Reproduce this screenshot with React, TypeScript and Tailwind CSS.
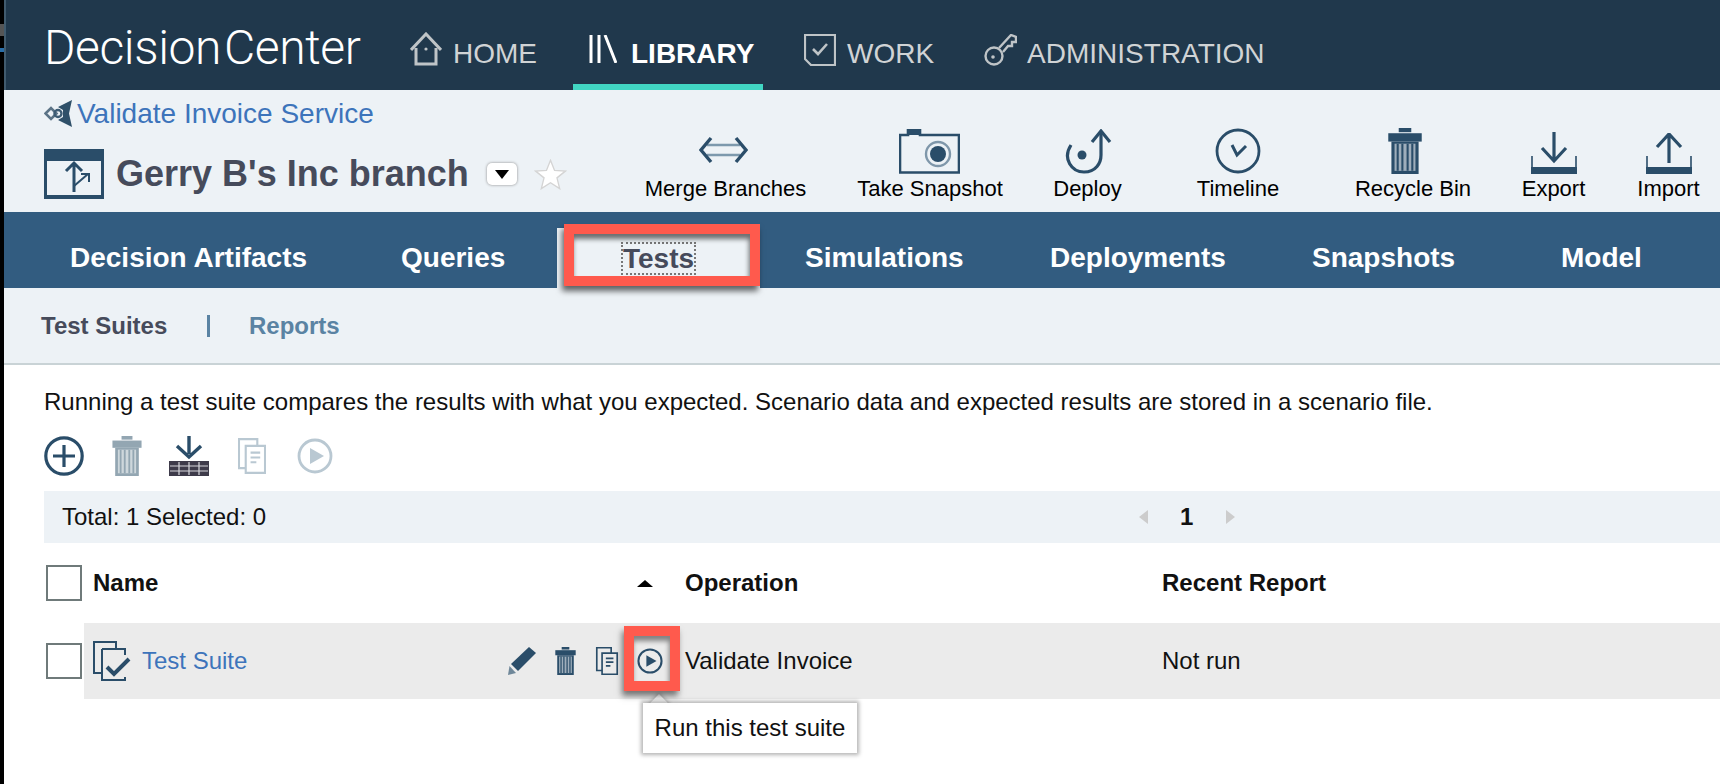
import React from 'react';

const navy = '#2a4d69';

const HomeIcon = () => (
  <svg width="32" height="34" viewBox="0 0 32 34" fill="none" stroke="#bfc4c7" strokeWidth="3">
    <path d="M1 18 L16 2 L31 18" />
    <path d="M6 16 V32 H26 V16" />
    <circle cx="16" cy="17" r="1.6" fill="#bfc4c7" stroke="none" />
  </svg>
);

const LibraryIcon = () => (
  <svg width="28" height="28" viewBox="0 0 28 28" fill="none" stroke="#fff" strokeWidth="3">
    <path d="M2 0 V28 M10 0 V28 M16 0 L27 28" />
  </svg>
);

const WorkIcon = () => (
  <svg width="32" height="32" viewBox="0 0 32 32" fill="none" stroke="#bfc4c7" strokeWidth="2.2">
    <path d="M1 1 H31 V31 H7 L1 25 Z" />
    <path d="M9 15 L14 20 L23 10" strokeWidth="2.6" />
  </svg>
);

const KeyIcon = () => (
  <svg width="33" height="32" viewBox="0 0 33 32" fill="none" stroke="#bfc4c7" strokeWidth="2.4">
    <circle cx="10" cy="22" r="8.500" />
    <circle cx="9" cy="23" r="1.800" fill="#bfc4c7" stroke="none" />
    <path d="M15 14 L27 1 L32 3 V8 H28 V12 H24 L19 18" />
  </svg>
);

const ServiceIcon = () => (
  <svg width="28" height="27" viewBox="0 0 28 27" fill="none">
    <path d="M1.500 13.500 L7 8 L12.500 13.500 L7 19 Z" stroke="#5b7386" strokeWidth="2.6" />
    <circle cx="14" cy="13.500" r="3.500" stroke="#3d5c74" strokeWidth="2.4" />
    <path d="M28 0 L14 7 L19 10 L19 17 L14 20 L28 27 L25 13.500 Z" fill="#2f5069" />
  </svg>
);

const BranchIcon = () => (
  <svg width="60" height="50" viewBox="0 0 60 50" fill="none">
    <rect x="0" y="0" width="60" height="50" fill="#2a4d69" />
    <rect x="3" y="12" width="54" height="34" fill="#edf2f6" />
    <path d="M30 43 V14 M22 22 L30 14 L38 22" stroke="#2a4d69" strokeWidth="3" />
    <path d="M30 37 L44 25 M37 25 H45 V33" stroke="#2a4d69" strokeWidth="2" />
  </svg>
);

const MergeIcon = () => (
  <svg width="49" height="28" viewBox="0 0 49 28" fill="none" strokeWidth="3.4">
    <path d="M8 9 H41 M8 19 H41" stroke="#7d99ad" strokeWidth="2.6" />
    <path d="M12 2 L2 14 L12 26 M37 2 L47 14 L37 26" stroke={navy} />
  </svg>
);

const CameraIcon = () => (
  <svg width="61" height="45" viewBox="0 0 61 45" fill="none" stroke={navy}>
    <path d="M1 6 H9 V1 H21 V6 H60 V43.500 H1 Z" strokeWidth="2.6" />
    <rect x="9" y="0" width="12" height="6" fill={navy} stroke="none" />
    <circle cx="39" cy="25" r="12" strokeWidth="2.4" stroke="#7f97aa" />
    <circle cx="39" cy="25" r="8" fill={navy} stroke="none" />
  </svg>
);

const DeployIcon = () => (
  <svg width="48" height="45" viewBox="0 0 48 45" fill="none" stroke={navy} strokeWidth="3.2">
    <path d="M7 16 C-2 30 8 43 20 43 C32 43 37 34 37 26 V3" />
    <path d="M28 13 L37 2 L46 13" />
    <circle cx="18" cy="26" r="4.500" fill={navy} stroke="none" />
  </svg>
);

const ClockIcon = () => (
  <svg width="46" height="46" viewBox="0 0 46 46" fill="none" stroke={navy} strokeWidth="2.8">
    <circle cx="23" cy="23" r="21" />
    <path d="M17 17 L22 27 L31 18" strokeWidth="3" />
  </svg>
);

const TrashIcon = ({ w, h, color }: { w: number; h: number; color: string }) => (
  <svg width={w} height={h} viewBox="0 0 32 44" fill="none">
    <rect x="10" y="0" width="12" height="4" fill={color} />
    <rect x="0" y="5" width="32" height="8" fill={color} />
    <path d="M3 13 H29 V44 H3 Z" fill={color} />
    <rect x="6" y="15" width="20" height="26" fill="#fff" opacity="0.55" />
    <path d="M9 15 V41 M13.500 15 V41 M18.500 15 V41 M23 15 V41" stroke={color} strokeWidth="2" />
  </svg>
);

const ExportIcon = () => (
  <svg width="46" height="42" viewBox="0 0 46 42" fill="none" stroke={navy} strokeWidth="3.2">
    <path d="M23 0 V28 M11 16 L23 29 L35 16" />
    <path d="M1 24 V40 H45 V24" strokeWidth="1.6" />
    <rect x="0" y="35" width="46" height="7" fill={navy} stroke="none" />
  </svg>
);

const ImportIcon = () => (
  <svg width="46" height="41" viewBox="0 0 46 41" fill="none" stroke={navy} strokeWidth="3.2">
    <path d="M23 30 V2 M11 14 L23 1 L35 14" />
    <path d="M1 23 V39 H45 V23" strokeWidth="1.6" />
    <rect x="0" y="34" width="46" height="7" fill={navy} stroke="none" />
  </svg>
);

const PlusIcon = () => (
  <svg width="40" height="40" viewBox="0 0 40 40" fill="none" stroke={navy} strokeWidth="3.2">
    <circle cx="20" cy="20" r="18.200" />
    <path d="M20 9 V31 M9 20 H31" />
  </svg>
);

const ImportTableIcon = () => (
  <svg width="40" height="40" viewBox="0 0 40 40" fill="none">
    <path d="M20 0 V18 M8 10 L20 21 L32 10" stroke={navy} strokeWidth="3.4" />
    <rect x="0" y="25" width="40" height="15" fill="#3e3b4a" />
    <path d="M1 30 H39 M1 35 H39 M10 26 V39 M20 26 V39 M30 26 V39" stroke="#d8d8dc" strokeWidth="1.2" />
  </svg>
);

const CopyIcon = ({ w, h, color }: { w: number; h: number; color: string }) => (
  <svg width={w} height={h} viewBox="0 0 29 37" fill="none" stroke={color} strokeWidth="2.2">
    <path d="M8 31 H1 V1 H20 V8" />
    <path d="M8 8 H28 V36 H8 Z" />
    <path d="M13 15 H23 M13 20 H23 M13 25 H19" />
  </svg>
);

const PlayIcon = ({ s, color }: { s: number; color: string }) => (
  <svg width={s} height={s} viewBox="0 0 36 36" fill="none" stroke={color} strokeWidth="2.8">
    <circle cx="18" cy="18" r="16" />
    <path d="M13 10 L27 18 L13 26 Z" fill={color} stroke="none" />
  </svg>
);

const SuiteIcon = () => (
  <svg width="38" height="40" viewBox="0 0 38 40" fill="none" stroke={navy} strokeWidth="2">
    <path d="M8 32 H1 V1 H23 V7" />
    <path d="M9 8 H32 V14 M9 8 V39 H32 V36" />
    <path d="M14 26 L21 33 L36 18" strokeWidth="4" />
  </svg>
);

const PencilIcon = () => (
  <svg width="28" height="28" viewBox="0 0 28 28" fill={navy}>
    <path d="M21 0 L28 6 L10 24 L3 17 Z" />
    <path d="M1.500 19 L8 26 L0 28 Z" fill="#6f8799" />
  </svg>
);

const tools = [
  { label: 'Merge Branches', icon: <MergeIcon />, cell: 'w-[161px] mr-[51px]', shift: 'pr-[5px] pb-[10px]' },
  { label: 'Take Snapshot', icon: <CameraIcon />, cell: 'w-[146px] mr-[50px]', shift: 'pr-[2px]' },
  { label: 'Deploy', icon: <DeployIcon />, cell: 'w-[69px] mr-[75px]', shift: '' },
  { label: 'Timeline', icon: <ClockIcon />, cell: 'w-[82px] mr-[76px]', shift: '' },
  { label: 'Recycle Bin', icon: <TrashIcon w={34} h={46} color={navy} />, cell: 'w-[116px] mr-[50px]', shift: 'pr-[16px]' },
  { label: 'Export', icon: <ExportIcon />, cell: 'w-[65px] mr-[51px]', shift: '' },
  { label: 'Import', icon: <ImportIcon />, cell: 'w-[63px]', shift: '' },
];

const App: React.FC = () => {
  return (
    <div className="flex h-[784px] w-[1720px] overflow-hidden bg-white font-['Liberation_Sans',Arial,sans-serif]">
      {/* Edge of the window behind */}
      <div className="flex w-[4px] shrink-0 flex-col bg-black">
        <div className="mt-[24px] h-[12px] bg-[#555]" />
        <div className="mt-[12px] h-[4px] bg-[#2a6ea8]" />
      </div>

      <div className="relative min-w-0 flex-1">
        {/* Top nav */}
        <header className="flex h-[90px] border-l-2 border-[#415b6e] bg-[#20384c]">
          <div className="ml-[38px] mt-[20px] w-[366px] whitespace-nowrap font-['Roboto',sans-serif] text-[48px] font-light leading-[56px] tracking-[-0.4px] text-white">
            Decision<span className="ml-[3px]">Center</span>
          </div>
          <nav className="flex h-full items-start text-[28px] leading-[32px] text-[#d0d3d5]">
            <div className="flex w-[127px] items-start">
              <div className="mt-[32px]"><HomeIcon /></div>
              <span className="ml-[11px] mt-[38px]">HOME</span>
            </div>
            <div className="ml-[36px] flex h-full w-[190px] items-start border-b-[6px] border-[#41d6c3] pl-[16px] font-bold text-white">
              <div className="mt-[35px]"><LibraryIcon /></div>
              <span className="ml-[14px] mt-[38px]">LIBRARY</span>
            </div>
            <div className="ml-[41px] flex items-start">
              <div className="mt-[34px]"><WorkIcon /></div>
              <span className="ml-[11px] mt-[38px]">WORK</span>
            </div>
            <div className="ml-[50px] flex items-start">
              <div className="mt-[34px]"><KeyIcon /></div>
              <span className="ml-[10px] mt-[38px]">ADMINISTRATION</span>
            </div>
          </nav>
        </header>

        {/* Project header */}
        <section className="flex h-[122px] justify-between bg-[#edf2f6] pl-[40px] pr-[20px]">
          <div>
            <div className="mt-[10px] flex h-[27px] items-center text-[28px] leading-[27px] text-[#3d74bb]">
              <ServiceIcon />
              <span className="ml-[5px] whitespace-nowrap">Validate Invoice Service</span>
            </div>
            <div className="mt-[22px] flex items-center">
              <BranchIcon />
              <h1 className="ml-[12px] whitespace-nowrap text-[36px] font-bold leading-[44px] text-[#464b5b]">Gerry B's Inc branch</h1>
              <span className="ml-[18px] flex h-[22px] w-[30px] items-center justify-center rounded-[5px] bg-white shadow-[0_0_3px_#888]">
                <span className="h-0 w-0 border-x-[7px] border-t-[9px] border-x-transparent border-t-black" />
              </span>
              <svg className="ml-[17px]" width="33" height="31" viewBox="0 0 24 23" fill="#ffffff" stroke="#d4d4d4" strokeWidth="1">
                <path d="M12 1 L15 8.500 L23 9 L16.800 14 L18.800 22 L12 17.600 L5.200 22 L7.200 14 L1 9 L9 8.500 Z" />
              </svg>
            </div>
          </div>
          <div className="flex pt-[37px]">
            {tools.map((t) => (
              <div key={t.label} className={`flex flex-col items-center ${t.cell}`}>
                <div className={`flex h-[47px] items-end justify-center ${t.shift}`}>{t.icon}</div>
                <span className="mt-[2px] whitespace-nowrap text-[22px] leading-[25px] text-black">{t.label}</span>
              </div>
            ))}
          </div>
        </section>

        {/* Tabs */}
        <div className="flex h-[76px] bg-[#325c80] text-[28px] font-bold leading-[34px] text-white">
          <div className="ml-[66px] mt-[29px] w-[236px] whitespace-nowrap">Decision Artifacts</div>
          <div className="ml-[95px] mt-[29px] w-[104px] whitespace-nowrap">Queries</div>
          <div className="ml-[52px] mt-[16px] h-[60px] w-[203px] bg-[#edf2f6] pt-[14px] text-[#464b5b]">
            <div className="mx-auto h-[33px] w-[75px] whitespace-nowrap border-2 border-dotted border-[#777] text-center leading-[30px]">Tests</div>
          </div>
          <div className="ml-[45px] mt-[29px] w-[158px] whitespace-nowrap">Simulations</div>
          <div className="ml-[87px] mt-[29px] w-[174px] whitespace-nowrap">Deployments</div>
          <div className="ml-[88px] mt-[29px] w-[141px] whitespace-nowrap">Snapshots</div>
          <div className="ml-[108px] mt-[29px] w-[80px] whitespace-nowrap">Model</div>
        </div>

        {/* Sub nav */}
        <div className="flex h-[77px] items-center border-b-2 border-[#c9d3d6] bg-[#edf2f6] pl-[37px] text-[24px] font-bold leading-[28px]">
          <span className="w-[125px] whitespace-nowrap text-[#464b5b]">Test Suites</span>
          <span className="ml-[41px] h-[22px] w-[3px] bg-[#5a83a3]" />
          <span className="ml-[39px] text-[#5a83a3]">Reports</span>
        </div>

        {/* Content */}
        <main className="pl-[40px] text-[24px] leading-[26px] text-[#111]">
          <p className="mt-[24px] whitespace-nowrap">Running a test suite compares the results with what you expected. Scenario data and expected results are stored in a scenario file.</p>

          <div className="mt-[21px] flex h-[40px] items-center">
            <PlusIcon />
            <span className="ml-[27px]"><TrashIcon w={32} h={40} color="#93a6b2" /></span>
            <span className="ml-[26px]"><ImportTableIcon /></span>
            <span className="ml-[29px]"><CopyIcon w={28} h={36} color="#b9c8d2" /></span>
            <span className="ml-[31px]"><PlayIcon s={36} color="#b9c8d2" /></span>
          </div>

          <div className="mt-[15px] flex h-[52px] items-center bg-[#edf2f6] pl-[18px]">
            <span className="w-[1077px] whitespace-nowrap">Total: 1 Selected: 0</span>
            <span className="h-0 w-0 border-y-[7px] border-r-[9px] border-y-transparent border-r-[#ccc]" />
            <span className="ml-[32px] w-[13px] font-bold">1</span>
            <span className="ml-[33px] h-0 w-0 border-y-[7px] border-l-[9px] border-y-transparent border-l-[#ccc]" />
          </div>

          <div className="mt-[22px] flex h-[36px] items-center font-bold">
            <span className="ml-[2px] h-[36px] w-[36px] border-2 border-[#6f7a7a] bg-white" />
            <span className="ml-[11px] w-[544px]">Name</span>
            <span className="h-0 w-0 border-x-[8px] border-b-[7px] border-x-transparent border-b-black" />
            <span className="ml-[32px] w-[477px]">Operation</span>
            <span className="whitespace-nowrap">Recent Report</span>
          </div>

          <div className="mt-[22px] flex h-[76px] items-center">
            <span className="ml-[2px] h-[36px] w-[36px] shrink-0 border-2 border-[#6f7a7a] bg-white" />
            <div className="ml-[2px] flex h-full flex-1 items-center bg-[#ebebeb] pl-[9px]">
              <SuiteIcon />
              <span className="ml-[11px] w-[366px] text-[#3d74bb]">Test Suite</span>
              <PencilIcon />
              <span className="ml-[17px]"><TrashIcon w={25} h={28} color={navy} /></span>
              <span className="ml-[17px]"><CopyIcon w={24} h={28} color={navy} /></span>
              <span className="ml-[18px]"><PlayIcon s={26} color={navy} /></span>
              <span className="ml-[22px] w-[477px] whitespace-nowrap">Validate Invoice</span>
              <span>Not run</span>
            </div>
          </div>
        </main>

        {/* Tooltip */}
        <div className="absolute left-[648px] top-[697px] h-[14px] w-[14px] rotate-45 bg-white shadow-[0_0_4px_1px_rgba(0,0,0,0.25)]" />
        <div className="absolute left-[639px] top-[703px] flex h-[50px] w-[214px] items-center justify-center whitespace-nowrap bg-white text-[24px] text-[#111] shadow-[0_0_4px_2px_rgba(0,0,0,0.3)]">
          Run this test suite
        </div>

        {/* Annotations */}
        <div className="absolute left-[560px] top-[224px] h-[62px] w-[196px] border-[10px] border-[#ff5a4d] shadow-[-2px_5px_6px_rgba(0,0,0,0.6),inset_-1px_5px_5px_rgba(0,0,0,0.55)]" />
        <div className="absolute left-[620px] top-[626px] h-[65px] w-[56px] border-[10px] border-[#ff5a4d] shadow-[-2px_5px_6px_rgba(0,0,0,0.5),inset_-1px_5px_5px_rgba(0,0,0,0.45)]" />
      </div>
    </div>
  );
};

export default App;
